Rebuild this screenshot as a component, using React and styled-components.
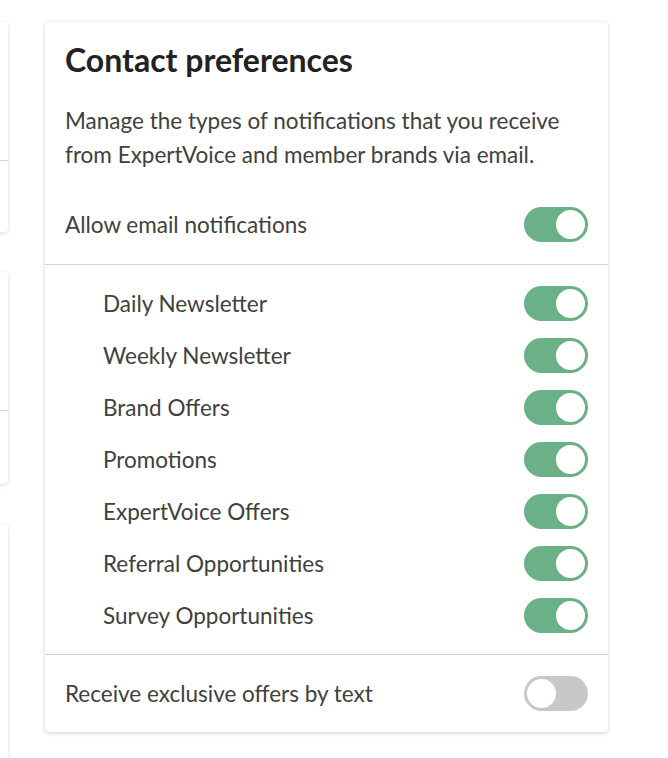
import styled, { createGlobalStyle } from "styled-components"

const GlobalStyle = createGlobalStyle`
    body {
    margin: 0;
    background-color: #ffffff;
    font-family: 'Lato', 'Liberation Sans', sans-serif;
    color: #404040;}
`
const Page = styled.div`
    display: flex;
    align-items: flex-start;
    gap: 37px;
    padding-top: 22px;
    height: 758px;
    box-sizing: border-box;
    overflow: hidden;
`
const SideColumn = styled.div`
    display: flex;
    flex-direction: column;
    gap: 40px;
    width: 8px;
    flex-shrink: 0;
`
const SideCard = styled.div`
    display: flex;
    flex-direction: column;
    height: ${(props) => props.height}px;
    margin-left: -300px;
    width: 308px;
    background-color: white;
    border-radius: 4px;
    box-shadow: 0 1px 4px rgba(0, 0, 0, 0.15);
`
const SideSplit = styled.div`
    height: ${(props) => props.top}px;
    border-bottom: 1px solid #d4d4d4;
`
const Card = styled.section`
    width: 563px;
    flex-shrink: 0;
    background-color: white;
    border-radius: 4px;
    box-shadow: 0 1px 4px rgba(0, 0, 0, 0.18);
`
const Section = styled.div`
    display: flex;
    flex-direction: column;
    gap: ${(props) => props.gap || 0}px;
    padding: ${(props) => props.pad || "21px 20px"};
    border-bottom: ${(props) => props.last ? "none" : "1px solid #cfcfcf"};
`
const Title = styled.h1`
    margin: 0;
    font-size: 32px;
    line-height: 36px;
    font-weight: 700;
    color: #222222;
`
const Description = styled.p`
    margin: 26px 0 35px;
    font-size: 22.5px;
    line-height: 34px;
    color: #404040;
`
const Row = styled.div`
    display: flex;
    align-items: center;
    justify-content: space-between;
    height: 35px;
    padding-left: ${(props) => props.indent ? 38 : 0}px;
    font-size: 22.5px;
    color: #404040;
`
const Toggle = styled.span`
    display: flex;
    justify-content: ${(props) => props.on ? "flex-end" : "flex-start"};
    align-items: center;
    box-sizing: border-box;
    width: 64px;
    height: 35px;
    padding: 3px;
    border-radius: 18px;
    background-color: ${(props) => props.on ? "#6ab187" : "#c8c8c8"};

    &::after {
    content: "";
    width: 29px;
    height: 29px;
    border-radius: 50%;
    background-color: white;}
`

const Opcoes = [
    "Daily Newsletter",
    "Weekly Newsletter",
    "Brand Offers",
    "Promotions",
    "ExpertVoice Offers",
    "Referral Opportunities",
    "Survey Opportunities"
]

function App () {
    return (
        <>
            <GlobalStyle />
            <Page>
                <SideColumn>
                    <SideCard height={210}>
                        <SideSplit top={138} />
                    </SideCard>
                    <SideCard height={212}>
                        <SideSplit top={138} />
                    </SideCard>
                    <SideCard height={260} />
                </SideColumn>
                <Card>
                    <Section pad="20px 20px 22px">
                        <Title>Contact preferences</Title>
                        <Description>Manage the types of notifications that you receive from ExpertVoice and member brands via email.</Description>
                        <Row>
                            <span>Allow email notifications</span>
                            <Toggle on />
                        </Row>
                    </Section>
                    <Section gap={17}>
                        {Opcoes.map((opcao) => (
                            <Row key={opcao} indent>
                                <span>{opcao}</span>
                                <Toggle on />
                            </Row>
                        ))}
                    </Section>
                    <Section last>
                        <Row>
                            <span>Receive exclusive offers by text</span>
                            <Toggle />
                        </Row>
                    </Section>
                </Card>
            </Page>
        </>
    )
}

export default App;
